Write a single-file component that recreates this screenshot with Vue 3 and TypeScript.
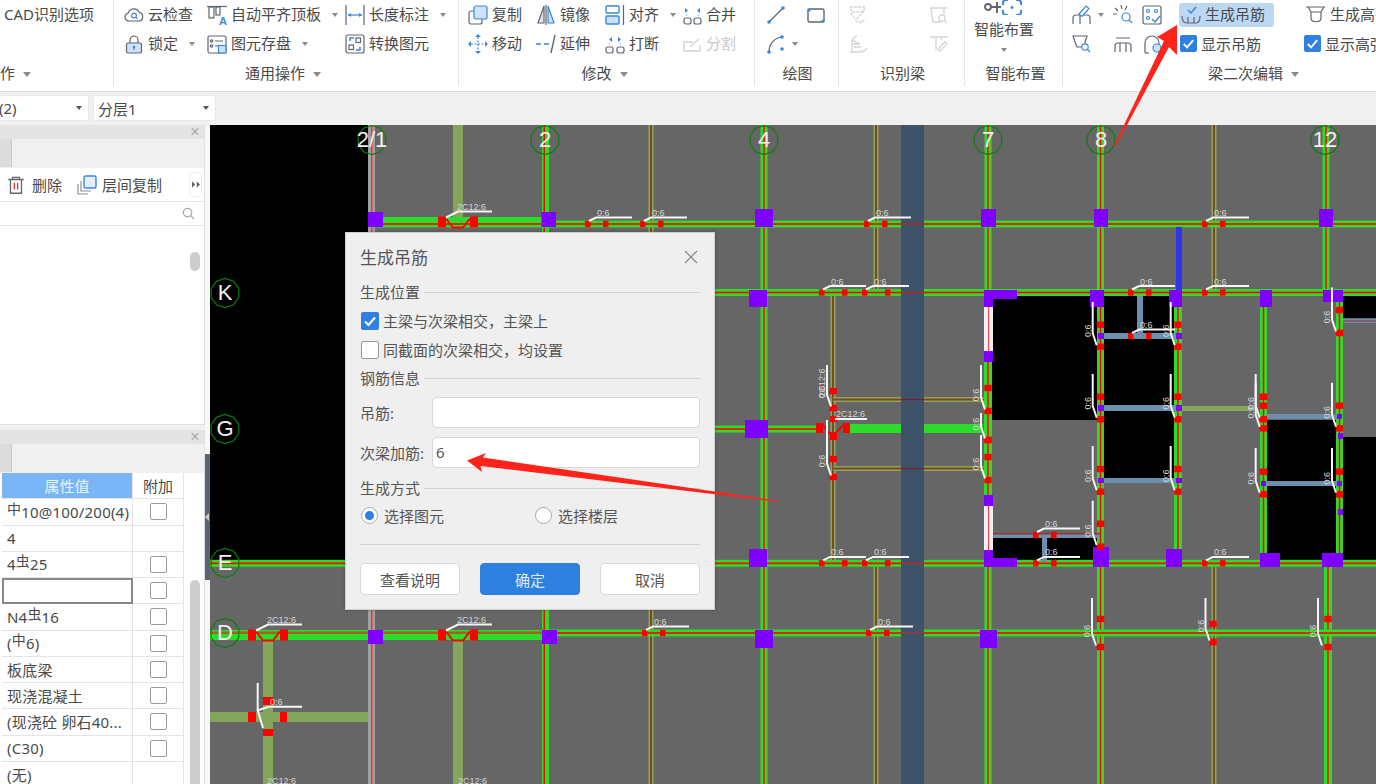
<template>
  <div class="app">
    <header class="ribbon">
      <section
        v-for="g in groups"
        :key="g.label"
        class="group"
        :style="{ width: g.width + 'px', paddingLeft: g.pad + 'px' }"
      >
        <div class="cols">
          <div v-for="(col, i) in g.cols" :key="i" class="col" :style="{ width: col.width + 'px' }">
            <template v-for="(it, j) in col.items" :key="j">
              <label v-if="it.check" class="item check-item">
                <span class="cb on"><svg viewBox="0 0 18 18"><path d="M4 9.5l3.5 3.5L14 5.5" /></svg></span>{{ it.text }}
              </label>
              <div v-else-if="it.big" class="big">
                <svg class="ic big-ic" viewBox="0 0 40 20" v-html="icons[it.icon!]"></svg>
                <span class="big-text">{{ it.text }}</span>
                <i class="caret"></i>
              </div>
              <div v-else class="item" :class="{ off: it.off, active: it.active, inset: it.inset }">
                <svg v-if="it.icon" class="ic" viewBox="0 0 20 20" v-html="icons[it.icon]"></svg>
                <span v-if="it.text" class="label">{{ it.text }}</span>
                <i v-if="it.caret" class="caret" :class="{ tight: !it.text }"></i>
              </div>
            </template>
          </div>
        </div>
        <div
          class="foot"
          :class="{ left: g.leftFoot }"
          :style="{ marginLeft: -g.pad + 'px', paddingLeft: (g.footL ?? 0) + 'px', paddingRight: (g.footR ?? 0) + 'px' }"
        >
          {{ g.label }}<i v-if="g.caret" class="caret"></i>
        </div>
      </section>
    </header>

    <div class="subbar">
      <div class="combo first"><span class="combo-cut">(2)</span><i class="caret dark"></i></div>
      <div class="combo second"><span>分层1</span><i class="caret dark"></i></div>
    </div>

    <main class="main">
      <aside class="side">
        <div class="panel upper">
          <div class="ptitle"><span class="pclose">×</span></div>
          <div class="ptabs"><span class="ptab"></span></div>
          <div class="ptools">
            <svg class="ic trash" viewBox="0 0 20 20">
              <path d="M3 5h14M7 5V3h6v2M5 5v12.5h10V5" />
              <path d="M8.5 8v6M11.5 8v6" stroke="#e8352c" />
            </svg>
            <span class="tool-text">删除</span>
            <svg class="ic copy2" viewBox="0 0 20 20" v-html="icons.layerCopy"></svg>
            <span class="tool-text">层间复制</span>
            <span class="more"><svg viewBox="0 0 10 8"><path d="M0 0l4 4-4 4zM6 0l4 4-4 4z" /></svg></span>
          </div>
          <div class="psearch">
            <svg class="search" viewBox="0 0 14 14"><circle cx="6" cy="6" r="4.5" /><path d="M9.5 9.5L13 13" /></svg>
          </div>
          <div class="thumb upper-thumb"></div>
        </div>

        <div class="panel lower">
          <div class="ptitle"><span class="pclose">×</span></div>
          <div class="ptabs"><span class="ptab"></span></div>
          <div class="table">
            <div class="th value">属性值</div>
            <div class="th extra">附加</div>
            <template v-for="(row, i) in rows" :key="i">
              <div class="td value" :class="{ selected: row.selected }">
                <div class="cell-text">
                  <template v-for="(part, k) in row.parts" :key="k">
                    <span v-if="part.sym" class="sym">{{ part.t }}</span><template v-else>{{ part.t }}</template>
                  </template>
                </div>
              </div>
              <div class="td extra"><span v-if="row.box" class="cb plain"></span></div>
            </template>
          </div>
          <div class="thumb lower-thumb"></div>
        </div>
      </aside>

      <div class="splitter"><span class="split-bar"></span></div>

      <div class="canvas">
        <svg class="drawing" viewBox="210 125 1166 659" width="1166" height="659">
          <rect
            v-for="(b, i) in blocks"
            :key="i"
            :x="b[0]"
            :y="b[1]"
            :width="b[2] - b[0]"
            :height="b[3] - b[1]"
            :fill="b[4]"
          />
          <polyline
            v-for="(p, i) in bends"
            :key="'b' + i"
            :points="p"
            fill="none"
            stroke="#ff0000"
            stroke-width="2"
          />
          <polyline
            v-for="(p, i) in leaders"
            :key="'l' + i"
            :points="p"
            fill="none"
            stroke="#f6f6f6"
            stroke-width="2"
          />
          <text
            v-for="(t, i) in marks"
            :key="'t' + i"
            class="mark"
            :x="t.x"
            :y="t.y"
            :transform="t.rot ? `rotate(-90 ${t.x} ${t.y})` : undefined"
            :text-anchor="t.rot ? 'middle' : 'start'"
          >{{ t.s }}</text>
          <g v-for="a in axes" :key="a.s">
            <polygon :points="ring(a.x, a.y)" fill="none" stroke="#0b7d0b" stroke-width="1.2" />
            <text class="axis" :x="a.x" :y="a.y + 7">{{ a.s }}</text>
          </g>
        </svg>

        <div class="dialog">
          <div class="dlg-title">
            <span>生成吊筋</span>
            <svg class="dlg-close" viewBox="0 0 14 14"><path d="M1 1l12 12M13 1L1 13" /></svg>
          </div>

          <div class="legend"><span>生成位置</span></div>
          <div class="opt first-opt"><span class="cb on"><svg viewBox="0 0 18 18"><path d="M4 9.5l3.5 3.5L14 5.5" /></svg></span>主梁与次梁相交，主梁上</div>
          <div class="opt"><span class="cb plain"></span>同截面的次梁相交，均设置</div>

          <div class="legend second-legend"><span>钢筋信息</span></div>
          <div class="field one"><span class="flabel">吊筋:</span><div class="input"></div></div>
          <div class="field two"><span class="flabel">次梁加筋:</span><div class="input">6</div></div>

          <div class="legend third"><span>生成方式</span></div>
          <div class="radios">
            <span class="radio-item wide"><i class="radio on"></i>选择图元</span>
            <span class="radio-item"><i class="radio"></i>选择楼层</span>
          </div>

          <div class="rule"></div>
          <div class="buttons">
            <button class="btn">查看说明</button>
            <button class="btn primary">确定</button>
            <button class="btn">取消</button>
          </div>
        </div>
      </div>
    </main>

    <svg class="arrows" viewBox="0 0 1376 784" width="1376" height="784">
      <polygon points="1114,146 1115.5,146.5 1169,47 1177,55 1177,25 1157,37 1164,41" fill="#ff2419" />
      <polygon points="778,502 778,500.8 483,457.5 486,453 467,460.5 482,472 480.5,466" fill="#ff2419" />
    </svg>
  </div>
</template>

<script setup lang="ts">
interface Item {
  icon?: string
  text?: string
  caret?: boolean
  off?: boolean
  active?: boolean
  check?: boolean
  big?: boolean
  inset?: boolean
}
interface Group {
  label: string
  width: number
  pad: number
  caret?: boolean
  leftFoot?: boolean
  footL?: number
  footR?: number
  cols: { width: number; items: Item[] }[]
}

const BLUE = '#3a86e0'
const PALE = '#cfe2fa'
const GREY = '#d4d4d4'

const icons: Record<string, string> = {
  cloud: `<path d="M5 16a4 4 0 0 1-.8-7.9A6 6 0 0 1 15.4 7.4 4.4 4.4 0 0 1 15 16z"/><circle cx="10" cy="10.6" r="2.4" stroke="${BLUE}"/><path d="M11.8 12.4l1.6 1.5" stroke="${BLUE}"/>`,
  lock: `<rect x="2.5" y="9" width="15" height="10" rx="1.5" fill="${PALE}"/><path d="M6 9V6a4 4 0 0 1 8 0v3"/><circle cx="10" cy="13" r="1.3" fill="${BLUE}" stroke="none"/><path d="M10 13v3" stroke="${BLUE}"/>`,
  flush: `<path d="M0 1.5h20"/><rect x="2" y="2" width="5" height="11"/><rect x="9" y="2" width="4" height="8"/><text x="12" y="19.5" font-size="11" font-weight="700" fill="${BLUE}" stroke="none" font-family="Liberation Sans">A</text>`,
  save: `<rect x="1" y="2" width="18" height="17" rx="1.5"/><circle cx="4.5" cy="7" r="1.2"/><circle cx="4.5" cy="12" r="1.2"/><path d="M8 7h8M8 12h3"/><rect x="11.5" y="11.5" width="7.5" height="7.5" fill="${PALE}" stroke="${BLUE}"/>`,
  dim: `<path d="M1 0v20M19 0v20"/><path d="M3 10h14" stroke="${BLUE}"/><path d="M3 10l3-2v4zM17 10l-3-2v4z" fill="${BLUE}" stroke="none"/>`,
  convert: `<rect x="1" y="1" width="18" height="18" rx="2"/><rect x="4" y="11" width="4.5" height="4.5"/><rect x="11" y="4" width="4.5" height="4.5"/><path d="M9 4H5v3M11 16h4v-3" stroke="${BLUE}" stroke-width="1.5"/>`,
  copy: `<rect x="1" y="6" width="13" height="13" rx="2"/><rect x="6" y="1" width="13" height="13" rx="2" fill="${PALE}" stroke="${BLUE}"/>`,
  mirror: `<path d="M8 1L2 18h6z" fill="#e4e6ea"/><path d="M12 1l6 17h-6z" fill="${PALE}" stroke="${BLUE}"/><path d="M10 0v20"/>`,
  move: `<path d="M10 3v14M3 10h14" stroke="${BLUE}" stroke-dasharray="2 1.5"/><path d="M10 0l3 3H7zM10 20l3-3H7zM0 10l3-3v6zM20 10l-3-3v6z" fill="${BLUE}" stroke="none"/>`,
  extend: `<path d="M0 10h5M8 10h5" stroke="${BLUE}" stroke-width="1.4"/><path d="M19 1l-4 18" stroke-width="1.4"/>`,
  align: `<rect x="1" y="1" width="13" height="7" rx="1" fill="#fff" stroke="${BLUE}" stroke-width="1.4"/><rect x="1" y="11" width="13" height="8" rx="1" fill="${PALE}" stroke="${BLUE}" stroke-width="1.4"/><path d="M18.5 0v20"/>`,
  merge: `<rect x="2" y="13" width="7" height="6" rx="2"/><rect x="12" y="13" width="7" height="6" rx="2"/><path d="M3 3l3 2.5L3 8zM18 3l-3 2.5L18 8z" fill="${BLUE}" stroke="none"/><path d="M4 10h1M16 10h1" stroke="${BLUE}"/>`,
  breakup: `<rect x="1" y="13" width="7" height="6" rx="2"/><rect x="12" y="13" width="7" height="6" rx="2"/><path d="M7 3L4 5.5 7 8zM13 3l3 2.5L13 8z" fill="${BLUE}" stroke="none"/><path d="M4 10h1M15 10h1" stroke="${BLUE}"/>`,
  split: `<path d="M18 11v6H2V8h9" stroke="${GREY}" stroke-width="1.4"/><path d="M8 13l9-8" stroke="${GREY}" stroke-width="1.4"/>`,
  line: `<path d="M3 17L17 3"/><circle cx="3" cy="17" r="1.8" fill="${BLUE}" stroke="none"/><circle cx="17" cy="3" r="1.8" fill="${BLUE}" stroke="none"/>`,
  rect: `<rect x="2" y="4" width="16" height="13" rx="1.5" stroke-width="1.4"/><circle cx="3" cy="5" r="1.6" fill="${BLUE}" stroke="none"/><circle cx="17" cy="16" r="1.6" fill="${BLUE}" stroke="none"/>`,
  arc: `<path d="M3 18C3 10 8 4 16 3"/><circle cx="3" cy="18" r="1.8" fill="${BLUE}" stroke="none"/><circle cx="16" cy="3" r="1.8" fill="${BLUE}" stroke="none"/><circle cx="16" cy="15" r="1.8" fill="${BLUE}" stroke="none"/>`,
  dis1: `<path d="M2 2h15l-2 5H4zM3 8l7 10M16 6l-7 8M11 16l2 2 4-4" stroke="${GREY}" stroke-width="1.3" stroke-dasharray="3 1"/>`,
  dis2: `<path d="M2 18h11M4 18V6l8 4H4M9 1L4 6M13 13h-7M13 16l2 2 4-4" stroke="${GREY}" stroke-width="1.3"/>`,
  dis3: `<path d="M1 3h17M2 3l2 14h9M15 3v6" stroke="${GREY}" stroke-width="1.3"/><circle cx="13" cy="13" r="3.2" stroke="${GREY}" stroke-width="1.3"/><path d="M15.5 15.5L18 18" stroke="${GREY}" stroke-width="1.3"/>`,
  dis4: `<path d="M1 3h18M7 3v14M12 3v3" stroke="${GREY}" stroke-width="1.3"/><path d="M11 17l7-7-2-2-7 7z" stroke="${GREY}" stroke-width="1.3"/>`,
  smart: `<circle cx="4" cy="12" r="3" stroke-width="1.9"/><path d="M7 12h10M13 7v11" stroke-width="1.9"/><path d="M24 5h-2a3 3 0 0 0-3 3v2M19 15v2a3 3 0 0 0 3 3h2M32 5h2a3 3 0 0 1 3 3v2M37 15v2a3 3 0 0 1-3 3h-2" stroke="${BLUE}" stroke-width="2"/><circle cx="28" cy="12.5" r="1.4" fill="${BLUE}" stroke="none"/>`,
  pen: `<path d="M1 19v-6a3 3 0 0 1 3-3h11a3 3 0 0 1 3 3v6M8 10v9"/><path d="M7 9l7-8 3 2.5-7 8z" fill="#fff" stroke="${BLUE}"/>`,
  scan: `<path d="M8 0l1 4M2 3l3 3M0 9h4M14 1l-2 4"/><circle cx="13" cy="12" r="4" stroke="${BLUE}"/><path d="M16 15l3 3" stroke="${BLUE}"/>`,
  dots: `<rect x="1" y="1" width="18" height="18" rx="2"/><circle cx="6" cy="6" r="1.5" stroke="${BLUE}"/><circle cx="14" cy="6" r="1.5" stroke="${BLUE}"/><circle cx="6" cy="13" r="1.5" stroke="${BLUE}"/><path d="M10 14l3 3 5-6" stroke="${BLUE}" stroke-width="1.5"/>`,
  funnel: `<path d="M1 2h14l-2 6v5H5L3 8z"/><circle cx="13" cy="13" r="3.2" fill="#fff" stroke="${BLUE}"/><path d="M15.5 15.5l2.5 2.5" stroke="${BLUE}"/>`,
  beam: `<path d="M2 18v-6a3 3 0 0 1 3-3h10a3 3 0 0 1 3 3v6M7 9v9M13 9v9M3 4h14"/>`,
  arch: `<path d="M3 19V9a7 7 0 0 1 14 0v10" /><path d="M3 19h4"/><circle cx="15" cy="14" r="4" fill="${PALE}" stroke="${BLUE}"/>`,
  stirrup: `<path d="M1 11c0 6 3 7 5 7h9c2 0 4-1 4-7M7 12v6M13 12v6"/><path d="M7 5l3 3 5-6" stroke="${BLUE}" stroke-width="1.5"/>`,
  high: `<path d="M0 2h19M2 2l3 5h10l3-5M5 7v6M15 7v6M5 13c0 5 10 5 10 0"/>`,
  layerCopy: `<path d="M1 9v10h10M4 6v10h10" stroke="#8a8f96"/><rect x="7" y="1" width="12" height="12" rx="1.5" fill="#e3eefc" stroke="${BLUE}" stroke-width="1.4"/>`,
}

const groups: Group[] = [
  {
    label: '作',
    width: 114,
    pad: 4,
    caret: true,
    leftFoot: true,
    cols: [{ width: 100, items: [{ text: 'CAD识别选项' }] }],
  },
  {
    label: '通用操作',
    width: 345,
    pad: 10,
    caret: true,
    footR: 6,
    cols: [
      { width: 83, items: [{ icon: 'cloud', text: '云检查' }, { icon: 'lock', text: '锁定', caret: true }] },
      { width: 138, items: [{ icon: 'flush', text: '自动平齐顶板', caret: true }, { icon: 'save', text: '图元存盘', caret: true }] },
      { width: 110, items: [{ icon: 'dim', text: '长度标注', caret: true }, { icon: 'convert', text: '转换图元' }] },
    ],
  },
  {
    label: '修改',
    width: 296,
    pad: 9,
    caret: true,
    footR: 4,
    cols: [
      { width: 68, items: [{ icon: 'copy', text: '复制' }, { icon: 'move', text: '移动' }] },
      { width: 69, items: [{ icon: 'mirror', text: '镜像' }, { icon: 'extend', text: '延伸' }] },
      { width: 77, items: [{ icon: 'align', text: '对齐', caret: true }, { icon: 'breakup', text: '打断' }] },
      { width: 70, items: [{ icon: 'merge', text: '合并' }, { icon: 'split', text: '分割', off: true }] },
    ],
  },
  {
    label: '绘图',
    width: 84,
    pad: 11,
    footL: 2,
    cols: [
      { width: 40, items: [{ icon: 'line' }, { icon: 'arc', caret: true }] },
      { width: 24, items: [{ icon: 'rect' }] },
    ],
  },
  {
    label: '识别梁',
    width: 126,
    pad: 9,
    footL: 2,
    cols: [
      { width: 81, items: [{ icon: 'dis1' }, { icon: 'dis2' }] },
      { width: 24, items: [{ icon: 'dis3' }, { icon: 'dis4' }] },
    ],
  },
  {
    label: '智能布置',
    width: 98,
    pad: 9,
    footL: 4,
    cols: [{ width: 80, items: [{ icon: 'smart', text: '智能布置', big: true }] }],
  },
  {
    label: '梁二次编辑',
    width: 386,
    pad: 9,
    caret: true,
    footR: 4,
    cols: [
      { width: 41, items: [{ icon: 'pen', caret: true }, { icon: 'funnel' }] },
      { width: 29, items: [{ icon: 'scan' }, { icon: 'beam' }] },
      { width: 37, items: [{ icon: 'dots' }, { icon: 'arch', caret: true }] },
      { width: 124, items: [{ icon: 'stirrup', text: '生成吊筋', active: true }, { text: '显示吊筋', check: true }] },
      { width: 90, items: [{ icon: 'high', text: '生成高强', inset: true }, { text: '显示高强', check: true }] },
    ],
  },
]

type Part = { t: string; sym?: boolean }
const rows: { parts: Part[]; box: boolean; selected?: boolean }[] = [
  { parts: [{ t: '中', sym: true }, { t: '10@100/200(4)' }], box: true },
  { parts: [{ t: '4' }], box: false },
  { parts: [{ t: '4' }, { t: '虫', sym: true }, { t: '25' }], box: true },
  { parts: [], box: true, selected: true },
  { parts: [{ t: 'N4' }, { t: '虫', sym: true }, { t: '16' }], box: true },
  { parts: [{ t: '(' }, { t: '中', sym: true }, { t: '6)' }], box: true },
  { parts: [{ t: '板底梁' }], box: true },
  { parts: [{ t: '现浇混凝土' }], box: true },
  { parts: [{ t: '(现浇砼 卵石40...' }], box: true },
  { parts: [{ t: '(C30)' }], box: true },
  { parts: [{ t: '(无)' }], box: false },
]

// drawing data, all in page coordinates (the viewBox starts at 210,125)
type Block = [number, number, number, number, string]
const GREEN = '#2bdc2b'
const RED = '#ff0000'
const PURPLE = '#8000ff'
const OLIVE = '#84a55c'
const blocks: Block[] = []
const leaders: string[] = []
const bends: string[] = []
const marks: { x: number; y: number; s: string; rot?: boolean }[] = []

const add = (x1: number, y1: number, x2: number, y2: number, c: string) => blocks.push([x1, y1, x2, y2, c])

// ordinary beam: green edges, brown core, red centre line
const hBeam = (y: number, x1: number, x2: number) => {
  add(x1, y - 3.5, x2, y + 3.5, GREEN)
  add(x1, y - 1, x2, y + 1, '#c0500f')
  add(x1, y - 0.5, x2, y + 0.5, RED)
}
const vBeam = (x: number, y1: number, y2: number, w = 7) => {
  add(x - w / 2, y1, x + w / 2, y2, GREEN)
  add(x - 1, y1, x + 1, y2, '#a8701c')
  add(x - 0.5, y1, x + 0.5, y2, RED)
}
const hThin = (y: number, x1: number, x2: number) => {
  add(x1, y - 2.5, x2, y + 2.5, '#8fa45a')
  add(x1, y - 1, x2, y + 1, '#7a4a22')
}
const vThin = (x: number, y1: number, y2: number) => {
  add(x - 2.5, y1, x + 2.5, y2, '#8fa45a')
  add(x - 1, y1, x + 1, y2, '#7a4a22')
}

// black floor openings
add(210, 125, 368, 564, '#000')
add(992, 296, 1097, 420, '#000')
add(1103, 296, 1175, 480, '#000')
add(1267, 420, 1337, 562, '#000')
add(1343, 296, 1376, 318, '#000')
add(1343, 437, 1376, 562, '#000')
add(992, 537, 1097, 562, '#000')

// olive secondary beams
add(453, 125, 463, 226, OLIVE)
add(453, 640, 463, 784, OLIVE)
add(263, 640, 273, 784, OLIVE)
add(210, 712, 370, 722, OLIVE)
add(1181, 406, 1250, 411, OLIVE)
vThin(651, 125, 784)
vThin(876, 125, 292)
vThin(876, 563, 784)
vThin(1214, 125, 292)
vThin(1214, 563, 784)
vThin(833, 292, 563)
hThin(399.5, 833, 988)
hThin(468.5, 833, 988)
add(1342, 319, 1376, 323, '#6a8fae')
add(1342, 320.5, 1376, 321.5, '#a03030')

// grid columns
add(368, 125, 375, 784, '#a0a0a0')
add(371, 125, 372.5, 784, '#ff3030')
add(542, 125, 549, 784, GREEN)
add(543.5, 125, 545, 784, RED)
vBeam(764, 125, 784)
vBeam(988, 125, 292)
vBeam(988, 292, 563, 8)
vBeam(988, 563, 784)
vBeam(1100.5, 125, 784)
vBeam(1178, 296, 563, 8)
vBeam(1263.5, 296, 563)
vBeam(1326, 125, 292)
vBeam(1339.5, 296, 563)
vBeam(1328, 563, 784, 8)

// grid rows
add(383, 217, 542, 223, GREEN)
hBeam(224, 372, 1376)
hBeam(292.5, 372, 1376)
hBeam(429, 714, 820)
add(850, 424, 983, 433, GREEN)
hBeam(563.3, 210, 1376)
add(210, 630, 545, 640, GREEN)
add(210, 631.5, 545, 634, '#a5601c')
hBeam(633, 545, 1376)

// blue-grey tie beams
const tie = '#6b8fad'
add(1103, 333, 1177, 339, tie)
add(1103, 405, 1177, 411, tie)
add(1103, 478, 1177, 483, tie)
add(1137, 296, 1143, 333, tie)
add(1266, 414, 1337, 419, tie)
add(1266, 481, 1337, 486, tie)
add(989, 533, 1100, 538, tie)
add(989, 533, 1100, 534.5, '#a03030')
add(1042, 537, 1047, 562, tie)
add(1176, 227, 1182, 290, '#3333ee')

// concrete columns
const columns: [number, number, number, number][] = [
  [368, 212, 383, 227], [541.5, 212, 556, 227], [755, 209, 773, 227], [981, 209, 996, 227],
  [1094, 209, 1108, 227], [1319, 209, 1333, 227],
  [749, 290, 767, 307], [984, 290, 1017, 299], [984, 290, 993, 307], [1090, 290, 1104, 307],
  [1169, 290, 1182, 307], [1260, 290, 1272, 307], [1323, 290, 1343, 302],
  [745, 420, 768, 438], [984, 351, 993, 362], [984, 495, 993, 506],
  [984, 550, 993, 567], [984, 558, 1017, 567],
  [749, 549, 767, 567], [1093, 547, 1109, 567], [1166, 549, 1182, 567], [1260, 553, 1280, 567], [1322, 553, 1343, 567],
  [368, 630, 383, 644], [542, 630, 557, 644], [755, 630, 773, 648], [980, 630, 997, 648],
  [1098, 333, 1104, 339], [1176, 333, 1182, 339], [1098, 405, 1104, 411], [1176, 405, 1182, 411],
  [1098, 478, 1104, 483], [1176, 478, 1182, 483], [1261, 481, 1266, 486], [1337, 414, 1342, 419],
  [1337, 481, 1342, 486], [1338, 433, 1343, 439], [1338, 509, 1343, 515],
]
columns.forEach(c => add(c[0], c[1], c[2], c[3], PURPLE))
add(984, 307, 993, 351, '#f6eef2')
add(984, 506, 993, 550, '#f6eef2')
add(988, 307, 989.2, 351, '#e05050')
add(988, 506, 989.2, 550, '#e05050')

// the blue slab band lies over green, the red centre lines stay on top
add(901, 125, 924, 784, '#3e5269')
const band: [number, string][] = [[224, '#c22'], [292.5, '#c22'], [399.5, '#7a2030'], [468.5, '#7a2030'], [563.3, '#c22'], [633, '#b33']]
band.forEach(([y, c]) => add(901, y - 0.6, 924, y + 0.6, c))

// horizontal hanger mark
const hMark = (x: number, y: number, gap = 18, s = '0:6') => {
  add(x, y - 3.2, x + 5.5, y + 3.2, RED)
  add(x + gap, y - 3.2, x + gap + 5.5, y + 3.2, RED)
  leaders.push(`${x + 4},${y - 3} ${x + 11},${y - 6.4} ${x + 47},${y - 6.4}`)
  marks.push({ x: x + 12, y: y - 8, s })
}
;[[585, 224], [640, 224], [864, 224], [1202, 224], [1128, 292.5], [1202, 292.5], [1128, 336], [1033, 535], [1033, 563.3], [1202, 563.3], [642, 633], [866, 633]].forEach(
  ([x, y]) => hMark(x, y),
)
;[[819, 292.5], [862, 292.5], [819, 563.3], [862, 563.3]].forEach(([x, y]) => hMark(x, y, 23))

// vertical hanger mark
const vMark = (x: number, top: number, cx: number, r1: number, r2: number, s = '0:6') => {
  add(cx - 3.7, r1 - 3.2, cx + 3.7, r1 + 3.2, RED)
  add(cx - 3.7, r2 - 3.2, cx + 3.7, r2 + 3.2, RED)
  leaders.push(`${x},${top} ${x},${r2 - 13.5} ${x + 4},${r2 - 1.5}`)
  marks.push({ x: x - 2, y: r2 - 16, s, rot: true })
}
const vMarks: [number, number, number, number, number][] = [
  [1092.7, 302, 1100.5, 324.7, 346.7], [1092.7, 374, 1100.5, 396.7, 419.3], [1092.7, 446, 1100.5, 469, 491.7], [1092.7, 500.7, 1100.5, 523.7, 546.7],
  [1170.7, 302, 1178, 324.7, 346.7], [1170.7, 374, 1178, 396.7, 419.3], [1170.7, 446, 1178, 469, 491.7],
  [1255.7, 374, 1263.5, 396.7, 419.3], [1255.7, 383, 1263.5, 405.7, 428.3], [1255.7, 448, 1263.5, 471.7, 494.3],
  [1332, 287.5, 1339.5, 310, 333], [1332, 382.7, 1339.5, 405.7, 428.3], [1332, 448, 1339.5, 471.7, 494.3],
  [981, 365, 988, 388, 411], [981, 413, 988, 440, 440], [981, 435, 988, 457, 480],
  [827, 365, 833, 391, 408], [827, 420, 833, 459, 477],
  [1092, 598, 1100.5, 619, 647], [1205.5, 598, 1213, 624, 642], [1318, 598, 1328, 619, 647],
]
vMarks.forEach(m => vMark(...m))
add(830, 416, 837, 422, RED)
add(830, 434, 837, 440, RED)

// bent-up bars on the heavy beams
const bent = (x: number, y: number) => {
  add(x, y, x + 8, y + 11, RED)
  add(x + 32, y, x + 40, y + 11, RED)
  bends.push(`${x + 8},${y + 2} ${x + 15},${y + 11} ${x + 25},${y + 11} ${x + 32},${y + 2}`)
  leaders.push(`${x + 8},${y + 1} ${x + 20},${y - 5} ${x + 54},${y - 5}`)
  marks.push({ x: x + 19, y: y - 7, s: '2C12:6' })
}
bent(248, 629.5)
bent(438, 629.5)
bent(438, 216.5)
add(816, 423, 823, 433, RED)
add(843, 423, 850, 433, RED)
bends.push('823,425 829,433 836,433 843,425')
leaders.push('835,419 867,419')
marks.push({ x: 836, y: 417, s: '2C12:6' })
marks.push({ x: 267, y: 784, s: '2C12:6' })
marks.push({ x: 458, y: 784, s: '2C12:6' })
marks.push({ x: 825, y: 383, s: '2C12:6', rot: true })

// the crossing at the bottom left
add(263, 697, 273, 705, RED)
add(263, 729, 273, 736, RED)
add(248, 712, 256, 722, RED)
add(280, 712, 287, 722, RED)
leaders.push('257.7,683 257.7,710 263,728')
leaders.push('256.7,710.7 268.7,706.7 302,706.7')
marks.push({ x: 270, y: 705, s: '0:6' })

const axes = [
  { s: '2/1', x: 372, y: 140 },
  { s: '2', x: 545, y: 140 },
  { s: '4', x: 764, y: 140 },
  { s: '7', x: 988, y: 140 },
  { s: '8', x: 1101, y: 140 },
  { s: '12', x: 1325, y: 140 },
  { s: 'K', x: 225, y: 293 },
  { s: 'G', x: 225, y: 429 },
  { s: 'E', x: 225, y: 563 },
  { s: 'D', x: 225, y: 633 },
]

function ring(cx: number, cy: number) {
  const pts: string[] = []
  for (let i = 0; i < 10; i++) {
    const a = (Math.PI * 2 * i) / 10 + Math.PI / 10
    pts.push(`${(cx + 14.5 * Math.cos(a)).toFixed(1)},${(cy + 14.5 * Math.sin(a)).toFixed(1)}`)
  }
  return pts.join(' ')
}
</script>

<style scoped>
.app {
  position: relative;
  width: 1376px;
  height: 784px;
  overflow: hidden;
  background: #f0f0f0;
  color: #4a4a4a;
  font-family: "Noto Sans", "Noto Sans CJK SC", sans-serif;
  font-size: 15px;
}

/* ribbon */
.ribbon {
  display: flex;
  height: 91px;
  background: #fff;
  border-bottom: 1px solid #dcdcdc;
  overflow: hidden;
}
.group {
  flex: none;
  box-sizing: border-box;
  height: 86px;
  border-right: 1px solid #e6e6e6;
}
.cols {
  display: flex;
  height: 59px;
}
.col {
  flex: none;
}
.item {
  display: flex;
  align-items: center;
  gap: 4px;
  height: 29px;
  white-space: nowrap;
  line-height: 20px;
}
.label {
  margin-top: -2px;
}
.item.off {
  color: #c8c8c8;
}
.item.inset {
  padding-left: 3px;
}
.item.active {
  height: 24px;
  width: 93px;
  margin: 3px 0 2px;
  padding-left: 2px;
  border-radius: 3px;
  background: #bcd7f2;
}
.check-item {
  padding-left: 1px;
}
.ic {
  flex: none;
  width: 20px;
  height: 20px;
  fill: none;
  stroke: #5f6670;
  stroke-width: 1.2;
}
.big {
  display: flex;
  flex-direction: column;
  align-items: center;
  width: 60px;
}
.big-ic {
  width: 40px;
  height: 20px;
  margin-top: -5px;
}
.big-text {
  margin-top: 4px;
  line-height: 20px;
}
.big .caret {
  margin: 9px 0 0;
}
.caret {
  display: inline-block;
  flex: none;
  width: 0;
  height: 0;
  margin-left: 7px;
  border: 3.5px solid transparent;
  border-top: 4px solid #8a8a8a;
  border-bottom: 0;
}
.caret.tight {
  margin-left: 2px;
}
.caret.dark {
  border-top-color: #555;
}
.foot {
  line-height: 28px;
  text-align: center;
  white-space: nowrap;
}
.foot.left {
  text-align: left;
}
.foot .caret {
  margin-left: 8px;
  border-width: 5px 4.5px 0;
  vertical-align: 2px;
}

/* second toolbar */
.subbar {
  display: flex;
  gap: 4px;
  box-sizing: border-box;
  height: 33px;
  padding-top: 3px;
}
.combo {
  display: flex;
  align-items: center;
  justify-content: space-between;
  box-sizing: border-box;
  height: 26px;
  padding-right: 6px;
  border-radius: 3px;
  background: #fff;
  border: 1px solid #e8e8e8;
  border-left-width: 0;
}
.combo-cut {
  margin-left: -1px;
}
.combo.first {
  width: 89px;
}
.combo.second {
  width: 123px;
  padding-left: 4px;
  border-left-width: 1px;
}

/* main */
.main {
  display: flex;
  height: 659px;
}
.side {
  flex: none;
  display: flex;
  flex-direction: column;
  gap: 5px;
  width: 205px;
}
.panel {
  position: relative;
  box-sizing: border-box;
  background: #fff;
  border-right: 1px solid #dfdfdf;
  overflow: hidden;
}
.upper {
  height: 300px;
  border-bottom: 1px solid #dfdfdf;
}
.lower {
  flex: 1;
}
.ptitle {
  display: flex;
  justify-content: flex-end;
  height: 14px;
  background: #e4e4e4;
}
.pclose {
  width: 14px;
  margin-right: 2px;
  color: #aaa;
  text-align: center;
  font: 16px/14px "Liberation Sans", sans-serif;
}
.ptabs {
  height: 29px;
  background: #f0f0f0;
}
.ptab {
  display: block;
  width: 11px;
  height: 28px;
  background: #dcdcdc;
  border-right: 1px solid #ccc;
}
.ptools {
  position: relative;
  display: flex;
  align-items: center;
  box-sizing: border-box;
  height: 34px;
  padding-left: 5px;
  border-bottom: 1px solid #e6e6e6;
}
.trash {
  width: 22px;
  height: 22px;
}
.tool-text {
  margin-left: 5px;
}
.copy2 {
  margin-left: 15px;
}
.more {
  position: absolute;
  left: 189px;
  top: 4px;
  box-sizing: border-box;
  display: flex;
  align-items: center;
  justify-content: center;
  width: 13px;
  height: 25px;
  border: 1px solid #eee;
  border-radius: 4px;
}
.more svg {
  width: 8px;
  height: 7px;
  fill: #666;
}
.psearch {
  display: flex;
  align-items: center;
  justify-content: flex-end;
  box-sizing: border-box;
  height: 24px;
  padding-right: 9px;
  border-bottom: 1px solid #e6e6e6;
}
.search {
  width: 13px;
  height: 13px;
  fill: none;
  stroke: #aaa;
  stroke-width: 1.4;
}
.thumb {
  position: absolute;
  left: 190px;
  width: 10px;
  border-radius: 5px;
  background: #cdcdcd;
}
.upper-thumb {
  top: 127px;
  height: 19px;
}
.lower-thumb {
  top: 150px;
  height: 220px;
}

.table {
  display: grid;
  grid-template-columns: 133px 51px;
  grid-auto-rows: 26.25px;
  width: 184px;
}
.th,
.td {
  box-sizing: border-box;
  display: flex;
  align-items: center;
  border-right: 1px solid #e4e4e4;
  border-bottom: 1px solid #e4e4e4;
}
.th {
  justify-content: center;
}
.th.value {
  margin-left: 2px;
  background: #7ab6f7;
  color: #e9f3fd;
}
.td.value {
  margin-left: 2px;
  padding-left: 5px;
  overflow: hidden;
}
.cell-text {
  white-space: nowrap;
  letter-spacing: 0.2px;
}
.td.extra {
  justify-content: center;
}
.td.selected {
  border: 2px solid #888;
}
.sym {
  font-size: 14px;
  line-height: 14px;
  vertical-align: 4px;
}

/* shared checkbox */
.cb {
  flex: none;
  display: block;
  box-sizing: border-box;
  width: 17px;
  height: 17px;
  border-radius: 2px;
}
.cb.on {
  background: #2f80e0;
}
.cb.on svg {
  display: block;
  width: 100%;
  height: 100%;
  fill: none;
  stroke: #fff;
  stroke-width: 2;
}
.cb.plain {
  background: #fff;
  border: 1px solid #9a9a9a;
}

/* canvas */
.splitter {
  flex: none;
  width: 5px;
  background: #f8f8f8;
}
.split-bar {
  position: relative;
  display: block;
  height: 126px;
  margin-top: 329px;
  background: #5a6572;
}
.split-bar::after {
  content: "";
  position: absolute;
  left: 0;
  top: 59px;
  border: 4px solid transparent;
  border-right: 4px solid #c4cad0;
  border-left: 0;
}
.canvas {
  position: relative;
  flex: 1;
  background: #666;
  overflow: hidden;
}
.drawing {
  display: block;
}
.mark {
  fill: #d8d8d8;
  font: 9px "Liberation Sans", sans-serif;
}
.axis {
  fill: #f0f0f0;
  font: 22px "Liberation Sans", sans-serif;
  text-anchor: middle;
}

/* dialog */
.dialog {
  position: absolute;
  left: 135px;
  top: 107px;
  box-sizing: border-box;
  width: 370px;
  height: 378px;
  padding: 0 14px;
  background: #efefef;
  border: 1px solid #d0d0d0;
  box-shadow: 0 0 3px rgba(0, 0, 0, 0.25);
  color: #555;
}
.dlg-title {
  display: flex;
  align-items: center;
  justify-content: space-between;
  height: 47px;
  font-size: 17px;
}
.dlg-close {
  width: 14px;
  height: 14px;
  margin-right: 2px;
  fill: none;
  stroke: #888;
  stroke-width: 1.2;
}
.legend {
  display: flex;
  align-items: center;
  gap: 4px;
  height: 24px;
}
.legend span {
  margin-top: -2px;
}
.legend::after {
  content: "";
  flex: 1;
  height: 1px;
  background: #d2d2d2;
}
.second-legend {
  margin-top: 2px;
}
.legend.third {
  margin-top: 8px;
}
.opt {
  display: flex;
  align-items: center;
  gap: 4px;
  height: 29px;
  padding-left: 1px;
}
.first-opt {
  margin-top: 2px;
}
.opt .cb {
  width: 18px;
  height: 18px;
}
.field {
  display: flex;
  align-items: center;
}
.field.one {
  margin-top: 7px;
}
.field.two {
  margin-top: 9px;
}
.flabel {
  flex: none;
  width: 72px;
}
.input {
  flex: 1;
  box-sizing: border-box;
  height: 31px;
  padding-left: 3px;
  line-height: 29px;
  background: #fff;
  border: 1px solid #d8d8d8;
  border-radius: 4px;
}
.radios {
  display: flex;
  align-items: center;
  height: 30px;
  padding-left: 1px;
}
.radio-item {
  display: flex;
  align-items: center;
  gap: 6px;
}
.radio-item.wide {
  width: 174px;
}
.radio {
  display: block;
  box-sizing: border-box;
  width: 17px;
  height: 17px;
  border-radius: 50%;
  background: #fff;
  border: 1px solid #aaa;
}
.radio.on {
  border: 4px solid #fff;
  outline: 1px solid #aaa;
  outline-offset: -1px;
  background: #2f80e0;
}
.rule {
  height: 1px;
  margin-top: 14px;
  background: #d2d2d2;
}
.buttons {
  display: flex;
  justify-content: space-between;
  margin-top: 18px;
}
.btn {
  box-sizing: border-box;
  width: 100px;
  height: 32px;
  padding: 0;
  background: #fff;
  border: 1px solid #d8d8d8;
  border-radius: 4px;
  color: #555;
  font: inherit;
}
.btn.primary {
  background: #2d80e0;
  border-color: #2d80e0;
  color: #dfeaf7;
}

.arrows {
  position: absolute;
  left: 0;
  top: 0;
  pointer-events: none;
}
</style>

<style>
html,
body {
  margin: 0;
  overflow: hidden;
}
</style>
